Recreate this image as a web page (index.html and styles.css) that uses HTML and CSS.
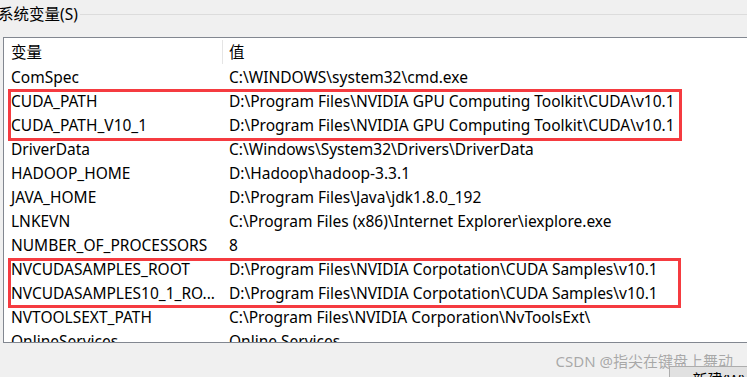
FILE: index.html
```html
<!DOCTYPE html>
<html lang="zh-CN">
<head>
  <meta charset="UTF-8">
  <title>系统变量</title>
  <link rel="stylesheet" href="styles.css">
</head>
<body>
  <div class="group">
    <div class="group-title">
      <span class="title-text">系统变量(S)</span>
      <span class="title-line"></span>
    </div>
    <div class="list">
      <div class="list-head">
        <span class="col-name">变量</span>
        <span class="col-value">值</span>
      </div>
      <div class="row"><span class="col-name">ComSpec</span><span class="col-value">C:\WINDOWS\system32\cmd.exe</span></div>
      <div class="mark mark-a">
        <div class="row"><span class="col-name">CUDA_PATH</span><span class="col-value">D:\Program Files\NVIDIA GPU Computing Toolkit\CUDA\v10.1</span></div>
        <div class="row"><span class="col-name">CUDA_PATH_V10_1</span><span class="col-value">D:\Program Files\NVIDIA GPU Computing Toolkit\CUDA\v10.1</span></div>
      </div>
      <div class="row"><span class="col-name">DriverData</span><span class="col-value">C:\Windows\System32\Drivers\DriverData</span></div>
      <div class="row"><span class="col-name">HADOOP_HOME</span><span class="col-value">D:\Hadoop\hadoop-3.3.1</span></div>
      <div class="row"><span class="col-name">JAVA_HOME</span><span class="col-value">D:\Program Files\Java\jdk1.8.0_192</span></div>
      <div class="row"><span class="col-name">LNKEVN</span><span class="col-value">C:\Program Files (x86)\Internet Explorer\iexplore.exe</span></div>
      <div class="row"><span class="col-name">NUMBER_OF_PROCESSORS</span><span class="col-value">8</span></div>
      <div class="mark mark-b">
        <div class="row"><span class="col-name">NVCUDASAMPLES_ROOT</span><span class="col-value">D:\Program Files\NVIDIA Corpotation\CUDA Samples\v10.1</span></div>
        <div class="row"><span class="col-name">NVCUDASAMPLES10_1_RO...</span><span class="col-value">D:\Program Files\NVIDIA Corpotation\CUDA Samples\v10.1</span></div>
      </div>
      <div class="row"><span class="col-name">NVTOOLSEXT_PATH</span><span class="col-value">C:\Program Files\NVIDIA Corporation\NvToolsExt\</span></div>
      <div class="row"><span class="col-name">OnlineServices</span><span class="col-value">Online Services</span></div>
    </div>
  </div>
  <div class="footer">
    <span class="watermark">CSDN @指尖在键盘上舞动</span>
    <button class="btn">新建(W)...</button>
  </div>
</body>
</html>
```

FILE: styles.css
```css
:root {
  --bg-color: #f0f0f0;
  --list-border: #828790;
  --mark-color: #f53b40;
  --text-color: #000000;
}
* {
  box-sizing: border-box;
  margin: 0;
  padding: 0;
}
body {
  font-family: 'Noto Sans', 'Noto Sans CJK SC', sans-serif;
  font-size: 15.5px;
  background: var(--bg-color);
  color: var(--text-color);
  width: 747px;
  height: 377px;
  overflow: hidden;
}
.group-title {
  display: flex;
  align-items: center;
  height: 30px;
  margin-left: -2px;
  padding-bottom: 2px;
}
.title-text {
  line-height: 20px;
  padding-right: 2px;
}
.title-line {
  flex: 1;
  height: 1px;
  background: #dcdcdc;
}
.list {
  margin: 7px 0 0 3px;
  height: 306px;
  background: #fff;
  border: 1px solid var(--list-border);
  border-right: none;
  overflow: hidden;
  white-space: nowrap;
}
.list-head {
  display: flex;
  align-items: center;
  height: 27px;
}
.list-head .col-value {
  border-left: 1px solid #e5e5e5;
  height: 24px;
  line-height: 24px;
  padding-left: 6px;
}
.list-head .col-name {
  width: 218px;
}
.row {
  display: flex;
  align-items: center;
  height: 24px;
}
.col-name {
  width: 219px;
  padding-left: 7px;
  overflow: hidden;
}
.col-value {
  padding-left: 6px;
}
.mark {
  position: relative;
}
.mark::after {
  content: '';
  box-sizing: border-box;
  position: absolute;
  left: 4px;
  width: 674px;
  top: 0;
  bottom: -4px;
  border: 3px solid var(--mark-color);
  pointer-events: none;
}
.mark-b::after {
  top: 1px;
  bottom: -3px;
  width: 673px;
}
.footer {
  display: flex;
  justify-content: flex-end;
  align-items: flex-start;
  padding-top: 5px;
}
.watermark {
  color: rgba(120, 120, 120, 0.6);
  font-size: 15px;
  margin-top: 2px;
  margin-right: -64px;
}
.btn {
  font-family: inherit;
  font-size: 15px;
  margin-top: 18px;
  width: 112px;
  height: 26px;
  margin-right: -34px;
  background: #e1e1e1;
  border: 1px solid #adadad;
  color: #000;
  line-height: 20px;
}
```
